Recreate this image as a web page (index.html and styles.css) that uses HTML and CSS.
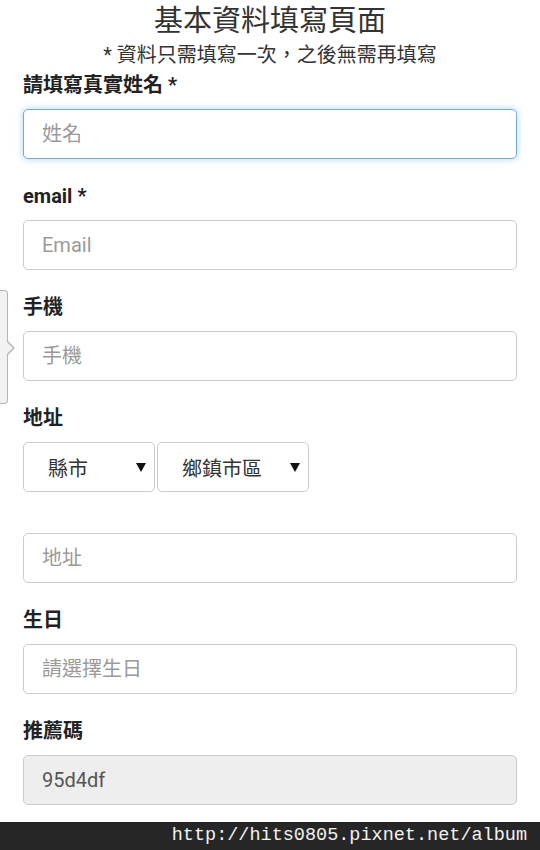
FILE: index.html
```html
<!DOCTYPE html>
<html lang="zh-Hant">
<head>
<meta charset="utf-8">
<title>基本資料填寫頁面</title>
<link rel="stylesheet" href="styles.css">
</head>
<body>
<div class="page">
  <div class="side-tab"><span class="side-notch"></span></div>
  <main class="form">
    <h1 class="title">基本資料填寫頁面</h1>
    <p class="subtitle">* 資料只需填寫一次，之後無需再填寫</p>
    <div class="fields">
      <div class="field">
        <label class="label">請填寫真實姓名 *</label>
        <input class="input input-focus" type="text" placeholder="姓名">
      </div>
      <div class="field">
        <label class="label">email *</label>
        <input class="input" type="text" placeholder="Email">
      </div>
      <div class="field">
        <label class="label">手機</label>
        <input class="input" type="text" placeholder="手機">
      </div>
      <div class="field">
        <label class="label">地址</label>
        <div class="select-row">
          <div class="select select-city"><span>縣市</span><svg class="caret" width="10" height="9" viewBox="0 0 10 9"><path d="M0 0H10L5 9Z" fill="#111"/></svg></div>
          <div class="select select-town"><span>鄉鎮市區</span><svg class="caret" width="10" height="9" viewBox="0 0 10 9"><path d="M0 0H10L5 9Z" fill="#111"/></svg></div>
        </div>
        <input class="input input-address" type="text" placeholder="地址">
      </div>
      <div class="field">
        <label class="label">生日</label>
        <input class="input" type="text" placeholder="請選擇生日">
      </div>
      <div class="field">
        <label class="label">推薦碼</label>
        <input class="input input-disabled" type="text" value="95d4df" disabled>
      </div>
    </div>
  </main>
  <footer class="watermark">http://hits0805.pixnet.net/album</footer>
</div>
</body>
</html>
```
FILE: styles.css
```css
html, body {
  margin: 0;
  padding: 0;
  background: #fff;
}

body {
  font-family: Roboto, "Noto Sans CJK TC", "Noto Sans", sans-serif;
  color: #333;
}

.page {
  position: relative;
  min-height: 850px;
  display: flex;
  flex-direction: column;
}

.form {
  padding: 0 23px;
  display: flex;
  flex-direction: column;
}

.title {
  margin: 4px 0 0;
  font-size: 29px;
  line-height: 34px;
  font-weight: 400;
  text-align: center;
  color: #333;
}

.subtitle {
  margin: 4px 0 0;
  font-size: 20px;
  line-height: 26px;
  text-align: center;
  color: #333;
}

.fields {
  margin-top: 5px;
  display: flex;
  flex-direction: column;
  gap: 25px;
}

.field {
  display: flex;
  flex-direction: column;
}

.label {
  font-size: 20px;
  line-height: 24px;
  font-weight: 700;
  color: #222;
  margin-bottom: 12px;
}

.input {
  box-sizing: border-box;
  width: 100%;
  height: 50px;
  margin: 0;
  padding: 0 18px;
  border: 1px solid #cccccc;
  border-radius: 5px;
  background: #fff;
  font: inherit;
  font-size: 20px;
  color: #555;
  outline: none;
}

.input::placeholder {
  color: #9a9a9a;
  opacity: 1;
}

.input-focus {
  border-color: #79a8d2;
  box-shadow: 0 0 7px rgba(102, 175, 233, 0.55);
}

.input-address {
  margin-top: 41px;
}

.input-disabled {
  background: #eeeeee;
  color: #555;
  -webkit-text-fill-color: #555;
}

.select-row {
  display: flex;
  gap: 2px;
}

.select {
  box-sizing: border-box;
  height: 50px;
  border: 1px solid #cccccc;
  border-radius: 5px;
  background: #fff;
  display: flex;
  align-items: center;
  justify-content: space-between;
  padding: 0 8px 0 24px;
  font-size: 20px;
  color: #333;
}

.select-city {
  width: 132px;
}

.select-town {
  width: 152px;
}

.caret {
  display: block;
}

.side-tab {
  position: absolute;
  left: 0;
  top: 290px;
  width: 8px;
  height: 114px;
  box-sizing: border-box;
  border: 1px solid #b5b5b5;
  border-left: none;
  border-radius: 0 4px 4px 0;
  background: #f2f2f2;
}

.side-notch {
  position: absolute;
  right: -8px;
  top: 49px;
  width: 0;
  height: 0;
  border-top: 8px solid transparent;
  border-bottom: 8px solid transparent;
  border-left: 8px solid #b5b5b5;
}

.side-notch::after {
  content: "";
  position: absolute;
  left: -9px;
  top: -7px;
  border-top: 7px solid transparent;
  border-bottom: 7px solid transparent;
  border-left: 7px solid #f2f2f2;
}

.watermark {
  margin-top: auto;
  height: 28px;
  line-height: 28px;
  background: #262626;
  color: #f2f2f2;
  font-family: "Liberation Mono", "DejaVu Sans Mono", monospace;
  font-size: 18.5px;
  text-align: right;
  padding-right: 13px;
}
```
